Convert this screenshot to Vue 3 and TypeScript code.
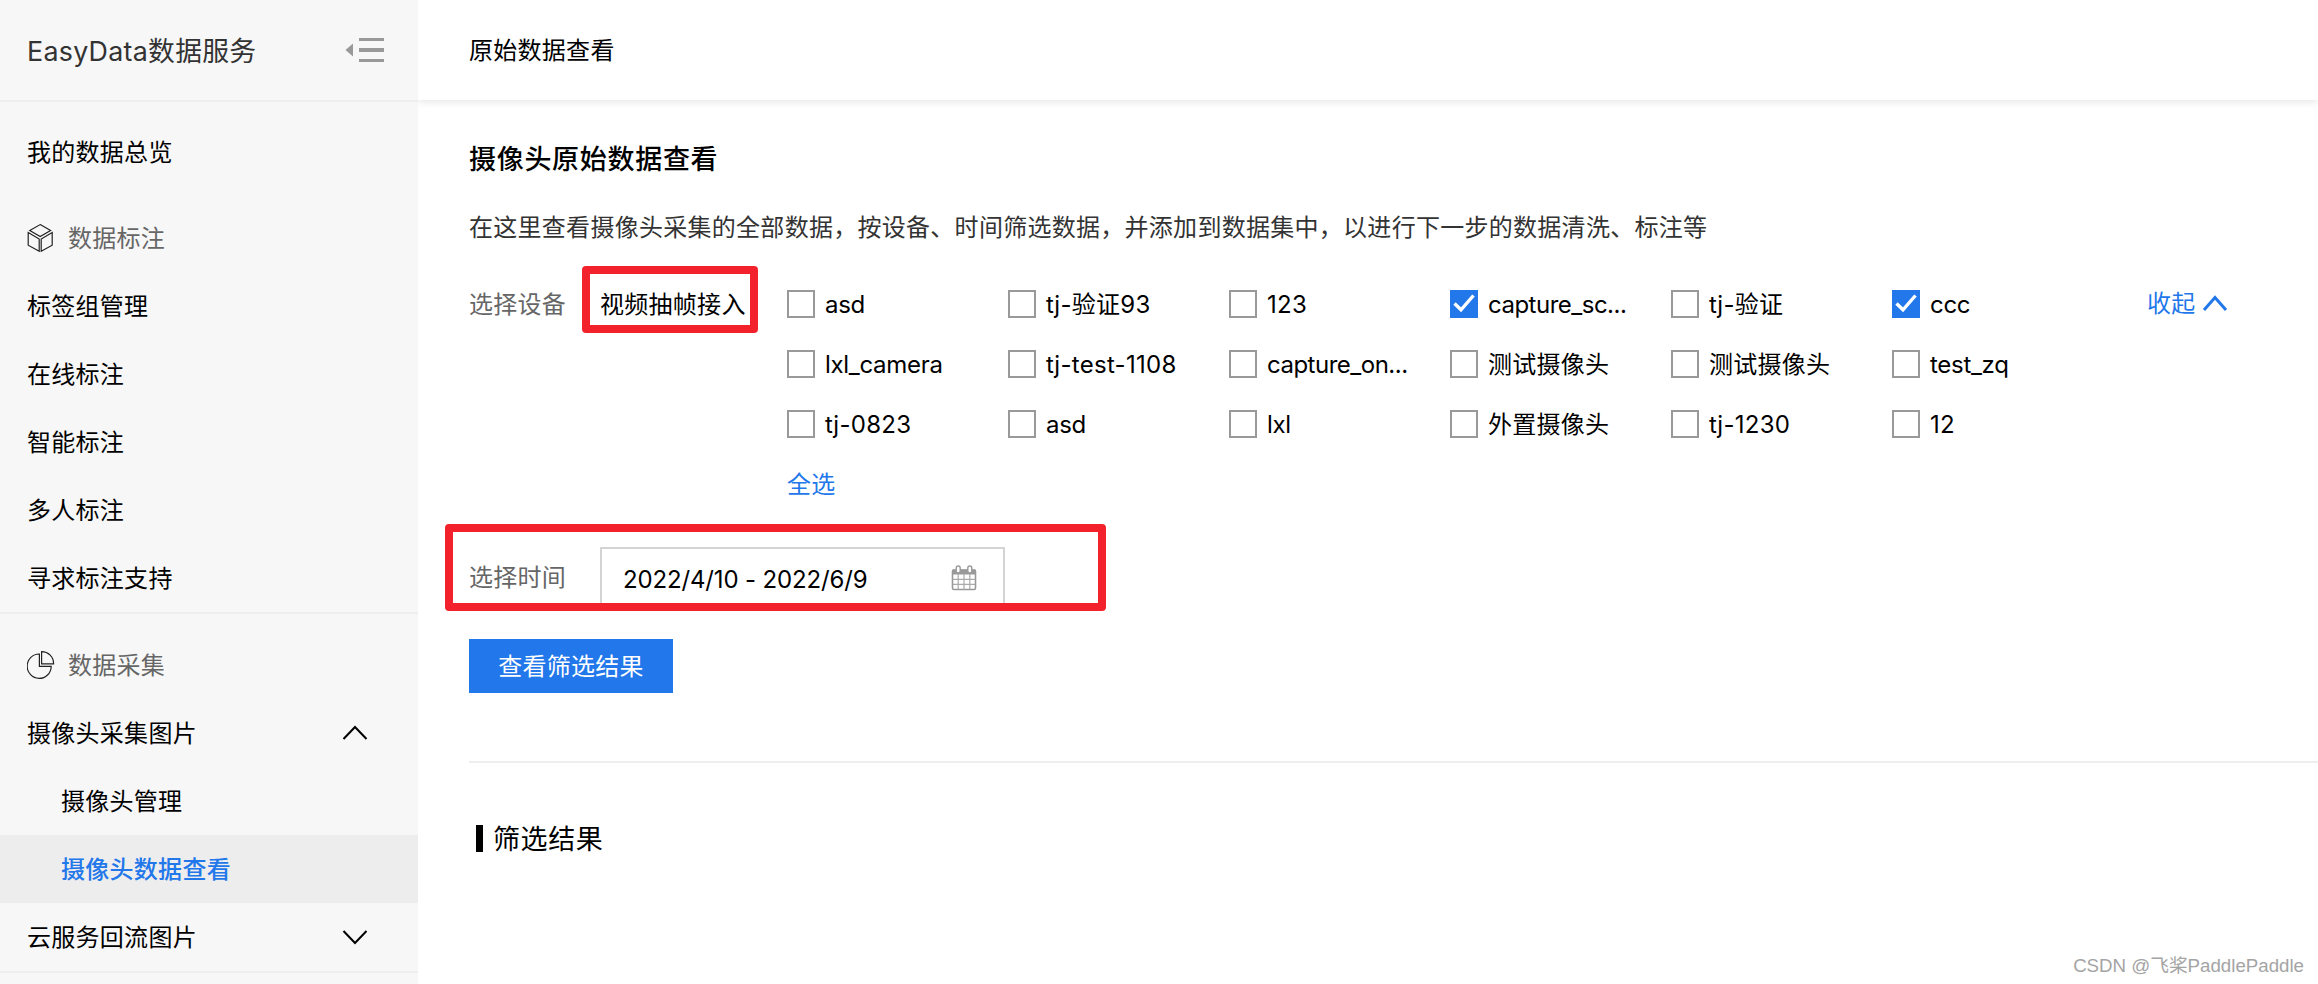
<script setup lang="ts">
interface Device {
  name: string
  checked?: boolean
}

const labelItems: string[] = ['标签组管理', '在线标注', '智能标注', '多人标注', '寻求标注支持']

const devices: Device[] = [
  { name: 'asd' },
  { name: 'tj-验证93' },
  { name: '123' },
  { name: 'capture_sc...', checked: true },
  { name: 'tj-验证' },
  { name: 'ccc', checked: true },
  { name: 'lxl_camera' },
  { name: 'tj-test-1108' },
  { name: 'capture_on...' },
  { name: '测试摄像头' },
  { name: '测试摄像头' },
  { name: 'test_zq' },
  { name: 'tj-0823' },
  { name: 'asd' },
  { name: 'lxl' },
  { name: '外置摄像头' },
  { name: 'tj-1230' },
  { name: '12' },
]

const isLong = (name: string): boolean => name.endsWith('...')
const isSnake = (name: string): boolean => name.includes('_') || /^[a-z]+$/.test(name)
</script>

<template>
  <div class="page">
    <aside class="sidebar">
      <div class="brand">
        <span class="brand-name">EasyData数据服务</span>
        <svg class="collapse" width="40" height="26" viewBox="0 0 40 26" fill="#999">
          <path d="M0.5 13 8 6.5v13z" />
          <path d="M14 1h25v3H14zM14 11h25v4H14zM14 22h25v3H14z" />
        </svg>
      </div>
      <nav>
        <div class="group first">
          <div class="item"><span>我的数据总览</span></div>
        </div>
        <div class="group labels">
          <div class="item section">
            <svg class="section-icon" width="28" height="30" viewBox="0 0 28 30" fill="none" stroke="#222" stroke-width="1.2">
              <path d="M13.2 1.6 23.6 7.6 13.2 13.6 2.8 7.6z" />
              <path d="M1.2 9.6 12.2 16v12.2L1.2 22.2z" />
              <path d="M25.2 9.6 14.2 16v12.2l11-6z" />
            </svg>
            <span>数据标注</span>
          </div>
          <div v-for="name in labelItems" :key="name" class="item"><span>{{ name }}</span></div>
        </div>
        <div class="group collect">
          <div class="item section">
            <svg class="section-icon" width="28" height="30" viewBox="0 0 28 30" fill="none" stroke="#222" stroke-width="1.2">
              <path d="M12.4 4A12 12.2 0 1 0 24.2 16.4H12.4z" />
              <path d="M14.6 1.6A12 12 0 0 1 26.6 13.8H14.6z" />
            </svg>
            <span>数据采集</span>
          </div>
          <div class="item">
            <span>摄像头采集图片</span>
            <svg class="arrow" width="26" height="16" viewBox="0 0 26 16" fill="none" stroke="#000" stroke-width="2">
              <path d="M1.5 14 13 2l11.5 12" />
            </svg>
          </div>
          <div class="item sub"><span>摄像头管理</span></div>
          <div class="item sub active"><span>摄像头数据查看</span></div>
          <div class="item">
            <span>云服务回流图片</span>
            <svg class="arrow" width="26" height="16" viewBox="0 0 26 16" fill="none" stroke="#000" stroke-width="2">
              <path d="M1.5 2 13 14 24.5 2" />
            </svg>
          </div>
        </div>
      </nav>
    </aside>

    <main class="main">
      <header class="topbar">原始数据查看</header>
      <section class="content">
        <h1 class="title">摄像头原始数据查看</h1>
        <p class="desc">在这里查看摄像头采集的全部数据，按设备、时间筛选数据，并添加到数据集中，以进行下一步的数据清洗、标注等</p>

        <div class="filter">
          <span class="filter-label">选择设备</span>
          <span class="source">视频抽帧接入<i class="mark mark-source"></i></span>
          <div class="device-area">
            <div class="devices">
              <label v-for="(d, i) in devices" :key="i" class="device">
                <span class="box" :class="{ checked: d.checked }">
                  <svg v-if="d.checked" width="28" height="28" viewBox="0 0 28 28" fill="none" stroke="#fff" stroke-width="3.4">
                    <path d="M4.5 13.5 11 19.8 23.5 5.5" />
                  </svg>
                </span>
                <span class="device-name" :class="{ snake: isSnake(d.name), long: isLong(d.name) }">{{ d.name }}</span>
              </label>
            </div>
            <a class="link select-all">全选</a>
          </div>
          <a class="link fold">
            <span>收起</span>
            <svg width="26" height="18" viewBox="0 0 26 18" fill="none" stroke="#2277ea" stroke-width="3">
              <path d="M2 15 13 2.5l11 12.5" />
            </svg>
          </a>
        </div>

        <div class="filter time">
          <span class="filter-label">选择时间</span>
          <div class="date">
            <span class="date-text">2022/4/10 - 2022/6/9</span>
            <svg class="calendar" width="26" height="26" viewBox="0 0 26 26">
              <rect x="1.5" y="5" width="23" height="19.5" rx="1.5" fill="#fff" stroke="#999" stroke-width="1.6" />
              <path d="M1.5 4.5h23v5h-23z" fill="#999" />
              <path d="M2 14.3h22M2 19.3h22M7.2 9v15M13 9v15M18.8 9v15" fill="none" stroke="#aaa" stroke-width="1.2" />
              <rect x="5.2" y="1" width="4" height="7" rx="2" fill="#fff" stroke="#999" stroke-width="1.4" />
              <rect x="16.8" y="1" width="4" height="7" rx="2" fill="#fff" stroke="#999" stroke-width="1.4" />
            </svg>
          </div>
          <i class="mark mark-time"></i>
        </div>

        <button class="submit" type="button">查看筛选结果</button>

        <div class="results">
          <h2 class="results-title"><span>筛选结果</span></h2>
        </div>
      </section>
    </main>
    <div class="watermark">CSDN @飞桨PaddlePaddle</div>
  </div>
</template>

<style>
body {
  background: #fff;
}
</style>

<style scoped>
.page {
  position: relative;
  display: flex;
  width: 2318px;
  height: 984px;
  overflow: hidden;
  font-family: Inter, 'Noto Sans CJK SC', sans-serif;
  font-size: 24px;
  letter-spacing: 0.28px;
  line-height: 36px;
  color: #000;
  background: #fff;
}

.sidebar {
  position: relative;
  z-index: 2;
  flex: none;
  width: 418px;
  background: #f7f7f7;
}

.brand {
  display: flex;
  align-items: center;
  justify-content: space-between;
  height: 100px;
  padding: 0 33px 0 27px;
  border-bottom: 2px solid #eee;
  font-size: 26.8px;
  color: #333;
}

.brand-name {
  padding-top: 2px;
}

.group {
  border-bottom: 2px solid #eee;
}

.group.first {
  padding: 16px 0 18px;
  border-bottom: 0;
}

.group.collect {
  padding-top: 17px;
}

.item {
  display: flex;
  align-items: center;
  justify-content: space-between;
  height: 68px;
  padding: 0 50px 0 27px;
}

.item > span {
  padding-top: 2px;
}

.item.section {
  justify-content: flex-start;
  gap: 13px;
  color: #666;
}

.section-icon {
  flex: none;
}

.item.sub {
  padding-left: 61px;
}

.item.active {
  color: #2277ea;
  font-weight: 500;
  background: #ededed;
}

.main {
  flex: 1;
  min-width: 0;
}

.topbar {
  box-sizing: border-box;
  display: flex;
  align-items: center;
  height: 100px;
  padding: 2px 0 0 51px;
  box-shadow: 0 2px 8px rgba(0, 0, 0, 0.1);
}

.content {
  padding: 40px 0 0 51px;
}

.title {
  margin: 0;
  font-size: 27px;
  font-weight: 500;
  letter-spacing: 0.7px;
  line-height: 40px;
}

.desc {
  margin: 30px 0 0;
  color: #333;
}

.filter {
  position: relative;
  display: flex;
  margin-top: 28px;
}

.filter-label {
  width: 131px;
  line-height: 61px;
  color: #666;
}

.source {
  position: relative;
  width: 187px;
  line-height: 61px;
}

.mark {
  position: absolute;
  box-sizing: border-box;
  border: 8px solid #f3212c;
  border-radius: 4px;
}

.mark-source {
  left: -18px;
  top: -8px;
  width: 176px;
  height: 67px;
}

.mark-time {
  left: -24px;
  top: -23px;
  width: 661px;
  height: 87px;
}

.device-area {
  width: 1360px;
}

.devices {
  display: grid;
  grid-template-columns: repeat(6, 221px);
  grid-auto-rows: 60px;
}

.device {
  display: flex;
  align-items: center;
  gap: 10px;
}

.device-name {
  padding-top: 2px;
}

.device-name.snake {
  letter-spacing: -0.3px;
}

.device-name.long {
  letter-spacing: -0.5px;
}

.box {
  box-sizing: border-box;
  width: 28px;
  height: 28px;
  border: 2px solid #999;
}

.box.checked {
  border: 0;
  background: #2277ea;
}

.box svg {
  display: block;
}

.link {
  color: #2277ea;
}

.select-all {
  display: block;
  height: 60px;
  line-height: 62px;
}

.fold {
  display: flex;
  align-items: center;
  gap: 6px;
  height: 60px;
}

.time {
  height: 56px;
  margin-top: 33px;
}

.date {
  box-sizing: border-box;
  display: flex;
  align-items: center;
  justify-content: space-between;
  width: 405px;
  height: 60px;
  padding: 5px 26px 0 21px;
  border: 2px solid #d4d4d4;
}

.date-text {
  letter-spacing: -0.15px;
}

.calendar {
  margin-bottom: 4px;
}

.submit {
  display: block;
  width: 204px;
  height: 54px;
  margin: 36px 0 0;
  padding: 1px 0 0;
  border: 0;
  font: inherit;
  letter-spacing: inherit;
  color: #fff;
  background: #2277ea;
}

.results {
  margin-top: 68px;
  padding: 60px 0 0 7px;
  border-top: 2px solid #eee;
}

.results-title {
  display: flex;
  align-items: center;
  gap: 10px;
  margin: 0;
  font-size: 27px;
  font-weight: 400;
  letter-spacing: 0.6px;
  line-height: 30px;
}

.results-title span {
  margin: 2px 0 -2px;
}

.results-title::before {
  content: '';
  width: 7px;
  height: 27px;
  background: #000;
}

.watermark {
  position: absolute;
  right: 14px;
  bottom: 4px;
  font-family: 'Liberation Sans', 'Noto Sans CJK SC', sans-serif;
  font-size: 18.7px;
  line-height: 28px;
  letter-spacing: 0;
  color: #a4a4a4;
}
</style>
